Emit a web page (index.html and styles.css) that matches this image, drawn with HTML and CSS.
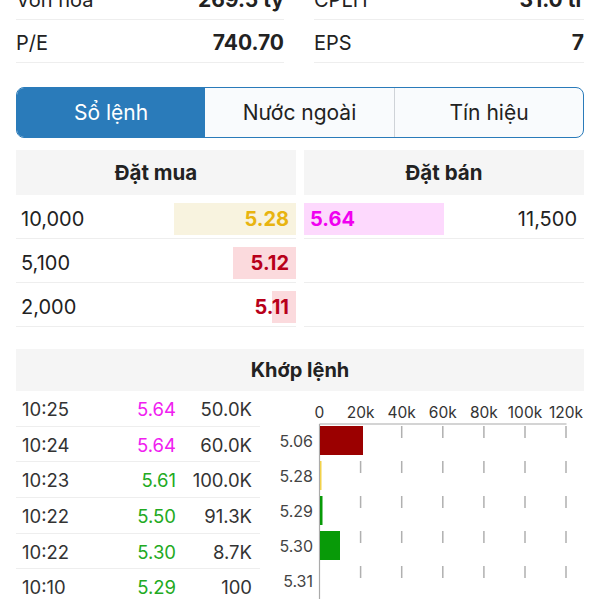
FILE: index.html
```html
<!DOCTYPE html>
<html lang="vi">
<head>
<meta charset="utf-8">
<link rel="stylesheet" href="styles.css">
</head>
<body>
<div class="page">
  <div class="stats">
    <div class="stat-col">
      <div class="stat-row"><span class="stat-label">Vốn hóa</span><span class="stat-value">269.5 tỷ</span></div>
      <div class="stat-row"><span class="stat-label">P/E</span><span class="stat-value">740.70</span></div>
    </div>
    <div class="stat-col">
      <div class="stat-row"><span class="stat-label">CPLH</span><span class="stat-value">31.0 tr</span></div>
      <div class="stat-row"><span class="stat-label">EPS</span><span class="stat-value">7</span></div>
    </div>
  </div>

  <div class="tabs">
    <div class="tab active">Sổ lệnh</div>
    <div class="tab">Nước ngoài</div>
    <div class="tab">Tín hiệu</div>
  </div>

  <div class="orderbook">
    <div class="ob-side">
      <div class="ob-head">Đặt mua</div>
      <div class="ob-row"><span class="ob-vol">10,000</span><span class="ob-price bid ref" style="--w:122px">5.28</span></div>
      <div class="ob-row"><span class="ob-vol">5,100</span><span class="ob-price bid down" style="--w:63px">5.12</span></div>
      <div class="ob-row"><span class="ob-vol">2,000</span><span class="ob-price bid down" style="--w:24px">5.11</span></div>
    </div>
    <div class="ob-side">
      <div class="ob-head">Đặt bán</div>
      <div class="ob-row"><span class="ob-price ask ceil" style="--w:140px">5.64</span><span class="ob-vol">11,500</span></div>
      <div class="ob-row"></div>
      <div class="ob-row"></div>
    </div>
  </div>

  <div class="matched">
    <div class="matched-head">Khớp lệnh</div>
    <div class="matched-body">
      <div class="trades">
        <div class="trade-row"><span>10:25</span><span class="tp ceil">5.64</span><span class="tv">50.0K</span></div>
        <div class="trade-row"><span>10:24</span><span class="tp ceil">5.64</span><span class="tv">60.0K</span></div>
        <div class="trade-row"><span>10:23</span><span class="tp up">5.61</span><span class="tv">100.0K</span></div>
        <div class="trade-row"><span>10:22</span><span class="tp up">5.50</span><span class="tv">91.3K</span></div>
        <div class="trade-row"><span>10:22</span><span class="tp up">5.30</span><span class="tv">8.7K</span></div>
        <div class="trade-row"><span>10:10</span><span class="tp up">5.29</span><span class="tv">100</span></div>
      </div>
      <svg class="chart" width="324" height="209" viewBox="0 0 324 209">
        <g class="ticks">
          <text x="59.5" y="28">0</text>
          <text x="100.6" y="28">20k</text>
          <text x="141.7" y="28">40k</text>
          <text x="182.8" y="28">60k</text>
          <text x="223.9" y="28">80k</text>
          <text x="265" y="28">100k</text>
          <text x="306" y="28">120k</text>
        </g>
        <g class="grid">
          <line x1="100.6" y1="36" x2="100.6" y2="209"/>
          <line x1="141.7" y1="36" x2="141.7" y2="209"/>
          <line x1="182.8" y1="36" x2="182.8" y2="209"/>
          <line x1="223.9" y1="36" x2="223.9" y2="209"/>
          <line x1="265" y1="36" x2="265" y2="209"/>
          <line x1="306" y1="36" x2="306" y2="209"/>
        </g>
        <line class="axis" x1="59.5" y1="34" x2="306.5" y2="34"/>
        <line class="axis" x1="59.5" y1="34" x2="59.5" y2="209"/>
        <rect x="60" y="36" width="43" height="29" fill="#9b0000"/>
        <rect x="60" y="71" width="1.5" height="29" fill="#f2d24a"/>
        <rect x="60" y="106" width="2.5" height="29" fill="#089a08"/>
        <rect x="60" y="141" width="20" height="29" fill="#089a08"/>
        <g class="cats">
          <text x="53" y="57">5.06</text>
          <text x="53" y="92">5.28</text>
          <text x="53" y="127">5.29</text>
          <text x="53" y="162">5.30</text>
          <text x="53" y="197">5.31</text>
        </g>
      </svg>
    </div>
  </div>
</div>
</body>
</html>
```

FILE: styles.css
```css
* { box-sizing: border-box; }
html, body { margin: 0; padding: 0; background: #fff; }
body {
  font-family: Inter, "Noto Sans", "DejaVu Sans", sans-serif;
  color: #222;
  width: 600px;
  height: 600px;
  overflow: hidden;
}
.page { padding: 0 16px; }

.stats {
  display: grid;
  grid-template-columns: 268px 270px;
  column-gap: 30px;
  margin-top: -23px;
}
.stat-row {
  display: flex;
  justify-content: space-between;
  align-items: center;
  height: 43px;
  padding-top: 3px;
  border-bottom: 1px solid #eeeeee;
  font-size: 20px;
}
.stat-value { font-weight: 700; font-size: 21px; }

.tabs {
  display: grid;
  grid-template-columns: 188px 189px 1fr;
  margin-top: 24px;
  height: 51px;
  border: 1.5px solid #2a7bba;
  border-radius: 8px;
  overflow: hidden;
  background: #f9fbfd;
}
.tab {
  display: flex;
  align-items: center;
  justify-content: center;
  font-size: 21px;
  color: #222;
  border-left: 1px solid #cfd3d8;
}
.tab:first-child { border-left: none; }
.tab.active { background: #2a7bba; color: #fff; }
.tab.active + .tab { border-left: none; }

.orderbook {
  display: grid;
  grid-template-columns: 1fr 1fr;
  column-gap: 8px;
  margin-top: 12px;
}
.ob-head {
  height: 45px;
  display: flex;
  align-items: center;
  justify-content: center;
  background: #f5f5f5;
  font-size: 20.5px;
  font-weight: 700;
}
.ob-row {
  height: 44px;
  display: flex;
  justify-content: space-between;
  align-items: center;
  padding-top: 4px;
  border-bottom: 1px solid #eeeeee;
  font-size: 20px;
}
.ob-vol { padding: 0 7px 0 5px; }
.ob-price {
  width: 150px;
  height: 32px;
  line-height: 32px;
  font-weight: 700;
  padding: 0 7px;
  background-repeat: no-repeat;
  background-size: var(--w) 100%;
}
.ob-price.bid { text-align: right; background-position: right top; }
.ob-price.ask { text-align: left; background-position: left top; padding-left: 6px; }
.ob-price.ref { color: #e8b410; background-image: linear-gradient(#f8f3df, #f8f3df); }
.ob-price.down { color: #b8001a; background-image: linear-gradient(#fbdadd, #fbdadd); }
.ob-price.ceil { color: #f000f0; background-image: linear-gradient(#fdd9fd, #fdd9fd); }

.matched { margin-top: 22px; }
.matched-head {
  height: 42px;
  display: flex;
  align-items: center;
  justify-content: center;
  background: #f5f5f5;
  font-size: 20px;
  font-weight: 700;
}
.matched-body {
  display: grid;
  grid-template-columns: 244px 324px;
}
.trade-row {
  display: grid;
  grid-template-columns: 1fr 60px 76px;
  align-items: center;
  height: 35.7px;
  padding: 1px 8px 0 6px;
  border-bottom: 1px solid #eeeeee;
  font-size: 18.5px;
  color: #333;
}
.tp, .tv { text-align: right; }
.tp.ceil { color: #f020f0; }
.tp.up { color: #22aa22; }

.chart { display: block; margin-top: -1px; font-family: Inter, "Noto Sans", sans-serif; }
.ticks text { font-size: 15.5px; fill: #333; text-anchor: middle; }
.cats text { font-size: 16px; fill: #444; text-anchor: end; }
.grid line { stroke: #b0b0b0; stroke-width: 1.5; stroke-dasharray: 12 23; }
.axis { stroke: #aaaaaa; stroke-width: 1.2; }
```
